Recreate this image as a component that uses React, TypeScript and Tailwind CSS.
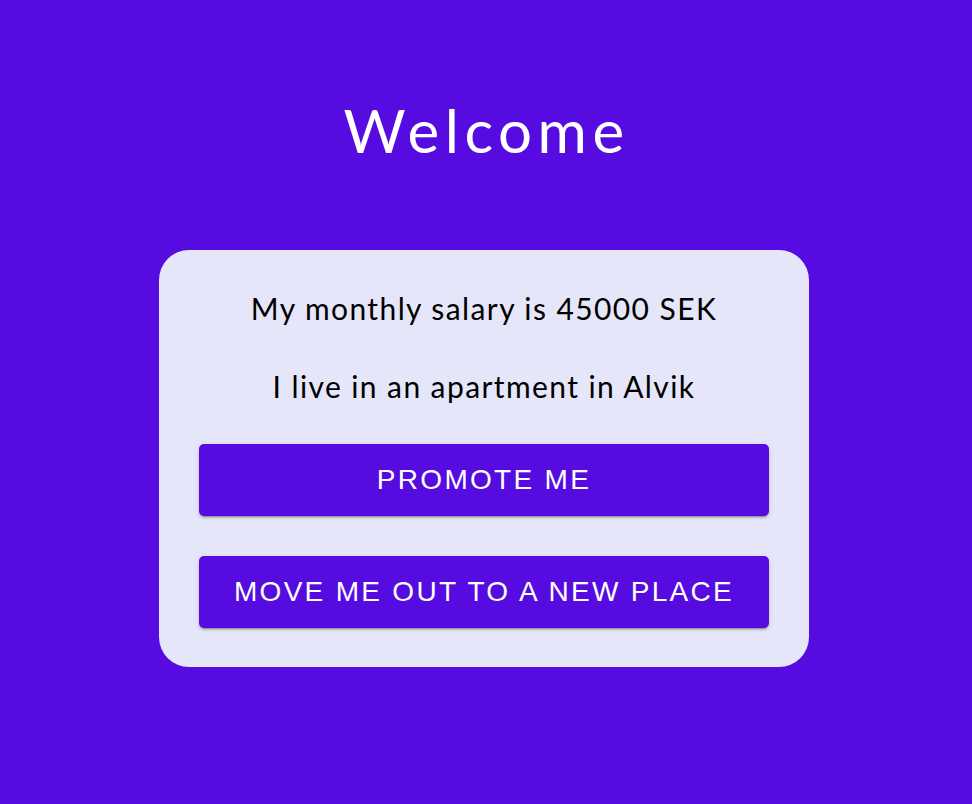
import React from 'react';

const headFont = { fontFamily: 'Lato, "Open Sans", sans-serif' };

const btnClass =
  "mt-10 h-[72px] w-full rounded-[5px] bg-[#560ce0] text-white uppercase text-[28px] tracking-[2.3px] font-['Liberation_Sans',Arial,sans-serif] shadow-[0_3px_1px_-2px_rgba(0,0,0,0.2),0_2px_2px_0_rgba(0,0,0,0.14),0_1px_5px_0_rgba(0,0,0,0.12)]";

export default function App() {
  const onPromote = () => {};
  const onMove = () => {};

  return (
    <div className="min-h-screen w-full bg-[#560ce0] pr-1 flex flex-col items-center" style={headFont}>
      <h1 className="mt-[94px] pl-[5px] text-[60px] leading-[72px] font-normal tracking-[5.5px] text-white">Welcome</h1>

      <div className="mt-[84px] w-[650px] rounded-[30px] bg-[#e6e6fa] px-10 pt-10 pb-[39px] flex flex-col items-stretch">
        <p className="text-center text-[30px] leading-[36px] font-normal tracking-[1.4px] text-black">My monthly salary is 45000 SEK</p>
        <p className="mt-[42px] text-center text-[30px] leading-[36px] font-normal tracking-[1.4px] text-black">I live in an apartment in Alvik</p>

        <button onClick={onPromote} className={btnClass}>
          Promote me
        </button>
        <button onClick={onMove} className={btnClass}>
          Move me out to a new place
        </button>
      </div>
    </div>
  );
}
